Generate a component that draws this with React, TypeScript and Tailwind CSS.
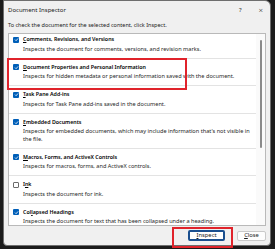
import React from "react";

interface Item {
  title: string;
  key: number;
  desc: string;
  checked: boolean;
}

const items: Item[] = [
  { title: "Comments, Revisions, and Versions", key: 0, desc: "Inspects the document for comments, versions, and revision marks.", checked: true },
  { title: "Document Properties and Personal Information", key: 0, desc: "Inspects for hidden metadata or personal information saved with the document.", checked: true },
  { title: "Task Pane Add-ins", key: 0, desc: "Inspects for Task Pane add-ins saved in the document.", checked: true },
  { title: "Embedded Documents", key: 0, desc: "Inspects for embedded documents, which may include information that's not visible in the file.", checked: true },
  { title: "Macros, Forms, and ActiveX Controls", key: 0, desc: "Inspects for macros, forms, and ActiveX controls.", checked: true },
  { title: "Ink", key: 1, desc: "Inspects the document for ink.", checked: false },
  { title: "Collapsed Headings", key: 3, desc: "Inspects the document for text that has been collapsed under a heading.", checked: true },
];

const Check = ({ checked }: { checked: boolean }) =>
  checked ? (
    <span className="w-[6px] h-[6px] rounded-[1px] bg-[#005fb8] flex items-center justify-center shrink-0">
      <svg width="5" height="5" viewBox="0 0 10 10">
        <path d="M2 5.2 L4.2 7.4 L8.2 2.8" stroke="white" strokeWidth="1.6" fill="none" />
      </svg>
    </span>
  ) : (
    <span className="w-[6px] h-[6px] rounded-[1px] border border-[#6b6b6b] bg-white shrink-0" />
  );

const Title = ({ text, k }: { text: string; k: number }) => (
  <span>
    {text.slice(0, k)}
    <span className="underline">{text[k]}</span>
    {text.slice(k + 1)}
  </span>
);

export default function App() {
  return (
    <div className="w-[275px] h-[249px] bg-[#1b1b1b] pl-[3px] pr-[4px] pb-[3px] font-['Noto_Sans',sans-serif] text-[#1a1a1a] overflow-hidden">
      <div className="relative h-full bg-[#f0f0f0] rounded-tr-[6px] rounded-b-[4px] border border-[#6e6e6e] flex flex-col">
        <div className="h-[18px] flex items-center pl-[4px] pr-[7px] text-[6px]">
          <span className="flex-1">Document Inspector</span>
          <span className="w-[6px] text-center">?</span>
          <span className="ml-[15px] text-[8px] leading-none font-light">×</span>
        </div>
        <div className="pl-[4px] text-[5.5px] leading-[8px] mt-[2px]">
          To check the document for the selected content, click Inspect.
        </div>
        <div className="ml-[4px] mr-[4px] mt-[4px] h-[193px] bg-white border border-[#b9b9b9] flex overflow-hidden">
          <div className="flex-1 flex flex-col">
            {items.map((it, i) => (
              <div
                key={it.title}
                className={`${i === 0 ? "pt-[1px]" : "pt-[4px]"} pb-[4.5px] border-b border-[#e3e3e3] pl-[4px] pr-[2px]`}
              >
                <div className="flex items-center gap-[4px] h-[9px]">
                  <Check checked={it.checked} />
                  <span className="text-[5.3px] font-semibold leading-[9px] text-black">
                    <Title text={it.title} k={it.key} />
                  </span>
                </div>
                <div className="pl-[10px] mt-[1.5px] text-[5.6px] leading-[7.5px] text-[#1f1f1f]">{it.desc}</div>
              </div>
            ))}
          </div>
          <div className="w-[9px] bg-[#fafafa] flex justify-center pt-[6px]">
            <div className="w-[2px] h-[108px] bg-[#8a8a8a] rounded-full" />
          </div>
        </div>
        <div className="flex justify-end items-center gap-[12px] pr-[4px] mt-[4px]">
          <button className="w-[37px] h-[11px] bg-white border-2 border-[#1a4f8f] rounded-[2px] text-[5.8px] leading-none flex items-center justify-center">
            <span><span className="underline">I</span>nspect</span>
          </button>
          <button className="w-[29px] h-[10px] bg-[#fdfdfd] border border-[#c9c9c9] rounded-[2px] text-[5.8px] leading-none flex items-center justify-center">
            <span><span className="underline">C</span>lose</span>
          </button>
        </div>
        <div className="absolute left-[3px] top-[57px] w-[180px] h-[32px] border-2 border-[#e0232b] pointer-events-none" />
        <div className="absolute left-[168px] top-[226px] w-[61px] h-[21px] border-2 border-[#e0232b] pointer-events-none" />
      </div>
    </div>
  );
}
